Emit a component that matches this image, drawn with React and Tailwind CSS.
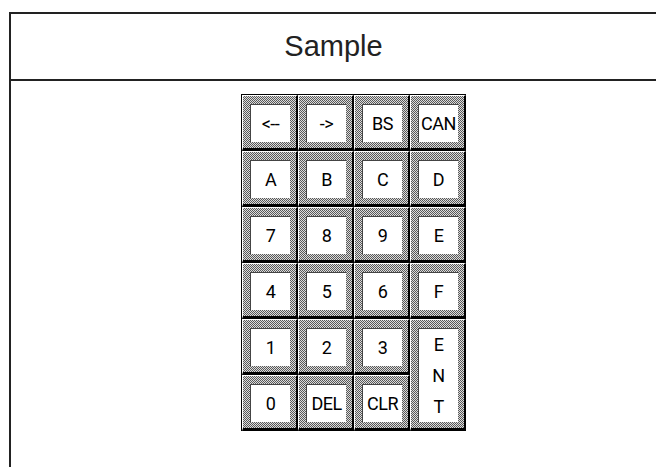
import React from 'react';

const keys = [
  '<--', '->', 'BS', 'CAN',
  'A', 'B', 'C', 'D',
  '7', '8', '9', 'E',
  '4', '5', '6', 'F',
  '1', '2', '3', 'ENT',
  '0', 'DEL', 'CLR',
];

const Key = ({ label, tall }) => (
  <div
    className={`border-l border-t border-l-white border-t-white border-r-2 border-b-[3px] border-r-black border-b-black bg-[#a0a0a0] bg-[image:conic-gradient(from_0deg_at_1px_1px,#585858_0_25%,#dcdcdc_0_50%,#585858_0_75%,#dcdcdc_0)] bg-[length:2px_2px] pl-[7px] pt-[8px] pr-[6px] pb-[6px] ${
      tall ? 'row-span-2' : ''
    }`}
  >
    <div className="h-full bg-white border-l border-t border-[#444] flex items-center justify-center font-['Roboto'] text-[18px] leading-none text-black whitespace-nowrap tracking-[-0.5px]">
      {tall ? (
        <div className="flex flex-col items-center gap-[13px]">
          {label.split('').map((c) => (
            <span key={c}>{c}</span>
          ))}
        </div>
      ) : (
        label
      )}
    </div>
  </div>
);

const App = () => {
  return (
    <div className="w-[667px] h-[467px] overflow-hidden bg-white pt-3 pl-[9px]">
      <div className="w-[647px] h-[470px] border-l-2 border-t-2 border-[#222]">
        <div className="h-[67px] flex items-center justify-center border-b-2 border-[#222] font-['Liberation_Sans'] text-[29px] text-[#222]">
          Sample
        </div>
        <div className="pt-[13px] pl-[230px]">
          <div className="grid grid-cols-[repeat(4,56px)] grid-rows-[repeat(6,56px)] border-l border-t border-black w-fit">
            {keys.map((k) => (
              <Key key={k} label={k} tall={k === 'ENT'} />
            ))}
          </div>
        </div>
      </div>
    </div>
  );
};

export default App;
